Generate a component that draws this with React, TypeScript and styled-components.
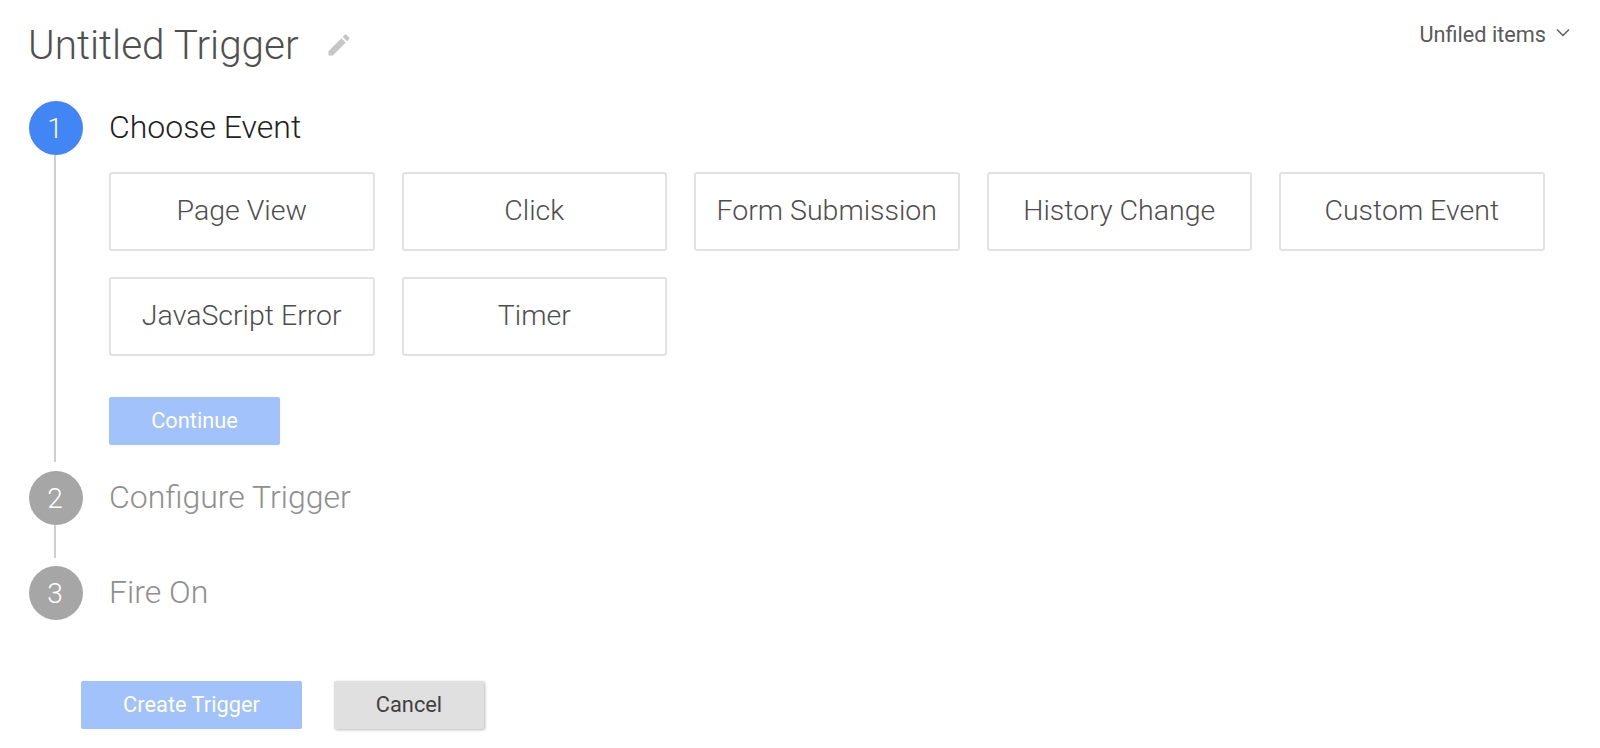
import styled, { createGlobalStyle } from "styled-components";

const GlobalStyle = createGlobalStyle`
  html, body {
    margin: 0;
    padding: 0;
    background: #fff;
  }

  body {
    font-family: Roboto, "Liberation Sans", sans-serif;
    color: #4d4d4d;
  }
`;

const Page = styled.div`
  width: 1600px;
  height: 748px;
  padding: 0 28px;
  box-sizing: border-box;
  overflow: hidden;
`;

const Header = styled.header`
  display: flex;
  align-items: flex-start;
  justify-content: space-between;
  height: 101px;
`;

const TitleWrap = styled.div`
  display: flex;
  align-items: center;
  gap: 26px;
  padding-top: 21px;
`;

const Title = styled.h1`
  margin: 0;
  font-weight: 300;
  font-size: 40.5px;
  line-height: 48px;
  color: #505050;
`;

const Folder = styled.div`
  display: flex;
  align-items: center;
  gap: 9px;
  padding: 22px 1px 0 0;
  font-size: 21.7px;
  line-height: 26px;
  color: #5a5a5a;

  svg {
    margin-bottom: 5px;
  }
`;

const Step = styled.section<{ $height: number }>`
  display: flex;
  gap: 26px;
  height: ${(p) => p.$height}px;
  padding-left: 1px;
`;

const Rail = styled.div`
  display: flex;
  flex-direction: column;
  align-items: center;
  width: 54px;
  flex-shrink: 0;
`;

const Circle = styled.div<{ $active?: boolean }>`
  width: 54px;
  height: 54px;
  flex-shrink: 0;
  border-radius: 50%;
  display: flex;
  align-items: center;
  justify-content: center;
  padding-right: 2px;
  box-sizing: border-box;
  font-weight: 300;
  font-size: 28px;
  color: #fff;
  background: ${(p) => (p.$active ? "#4285f4" : "#a6a6a6")};
`;

const RailLine = styled.div<{ $gap: number }>`
  width: 2px;
  flex: 1;
  margin: 0 2px ${(p) => p.$gap}px 0;
  background: #cfcfcf;
`;

const StepBody = styled.div`
  flex: 1;
`;

const StepTitle = styled.h2<{ $active?: boolean }>`
  margin: 0;
  height: 54px;
  line-height: 52px;
  font-weight: 300;
  font-size: 32px;
  color: ${(p) => (p.$active ? "#212121" : "#8f8f8f")};
`;

const EventGrid = styled.div`
  display: grid;
  grid-template-columns: repeat(5, 265.5px);
  column-gap: 27px;
  row-gap: 26px;
  margin-top: 17px;
`;

const EventCard = styled.button`
  height: 79px;
  padding: 0 0 3px;
  background: #fff;
  border: 2px solid #e2e2e2;
  border-radius: 3px;
  font-family: inherit;
  font-weight: 300;
  font-size: 28.5px;
  color: #4d4d4d;
`;

const PrimaryButton = styled.button<{ $width: number }>`
  width: ${(p) => p.$width}px;
  height: 48px;
  padding: 0 0 1px;
  border: 0;
  border-radius: 2px;
  background: #a1c2fa;
  color: #fff;
  font-family: inherit;
  font-size: 21.8px;
`;

const ContinueRow = styled.div`
  margin-top: 41px;
`;

const Footer = styled.footer`
  display: flex;
  gap: 32px;
  margin-top: 61px;
  padding-left: 53px;
`;

const CancelButton = styled.button`
  width: 150px;
  height: 48px;
  padding: 0 0 1px;
  border: 0;
  border-radius: 2px;
  background: #e0e0e0;
  box-shadow: 1px 1px 3px rgba(0, 0, 0, 0.28);
  color: #404040;
  font-family: inherit;
  font-size: 21.8px;
`;

const events = [
  "Page View",
  "Click",
  "Form Submission",
  "History Change",
  "Custom Event",
  "JavaScript Error",
  "Timer",
];

export default function App() {
  return (
    <Page>
      <GlobalStyle />
      <Header>
        <TitleWrap>
          <Title>Untitled Trigger</Title>
          <svg width="28" height="28" viewBox="0 0 24 24" fill="#c6c6c6">
            <path d="M3 17.25V21h3.75L17.81 9.94l-3.75-3.75L3 17.25zM20.71 7.04a1 1 0 0 0 0-1.41l-2.34-2.34a1 1 0 0 0-1.41 0l-1.83 1.83 3.75 3.75 1.83-1.83z" />
          </svg>
        </TitleWrap>
        <Folder>
          Unfiled items
          <svg width="16" height="10" viewBox="0 0 16 10" fill="none" stroke="#5a5a5a" strokeWidth="1.4">
            <path d="M2 1.5 8 7.5l6-6" />
          </svg>
        </Folder>
      </Header>

      <Step $height={370}>
        <Rail>
          <Circle $active>1</Circle>
          <RailLine $gap={9} />
        </Rail>
        <StepBody>
          <StepTitle $active>Choose Event</StepTitle>
          <EventGrid>
            {events.map((name) => (
              <EventCard key={name}>{name}</EventCard>
            ))}
          </EventGrid>
          <ContinueRow>
            <PrimaryButton $width={171}>Continue</PrimaryButton>
          </ContinueRow>
        </StepBody>
      </Step>

      <Step $height={95}>
        <Rail>
          <Circle>2</Circle>
          <RailLine $gap={8} />
        </Rail>
        <StepBody>
          <StepTitle>Configure Trigger</StepTitle>
        </StepBody>
      </Step>

      <Step $height={54}>
        <Rail>
          <Circle>3</Circle>
        </Rail>
        <StepBody>
          <StepTitle>Fire On</StepTitle>
        </StepBody>
      </Step>

      <Footer>
        <PrimaryButton $width={221}>Create Trigger</PrimaryButton>
        <CancelButton>Cancel</CancelButton>
      </Footer>
    </Page>
  );
}
